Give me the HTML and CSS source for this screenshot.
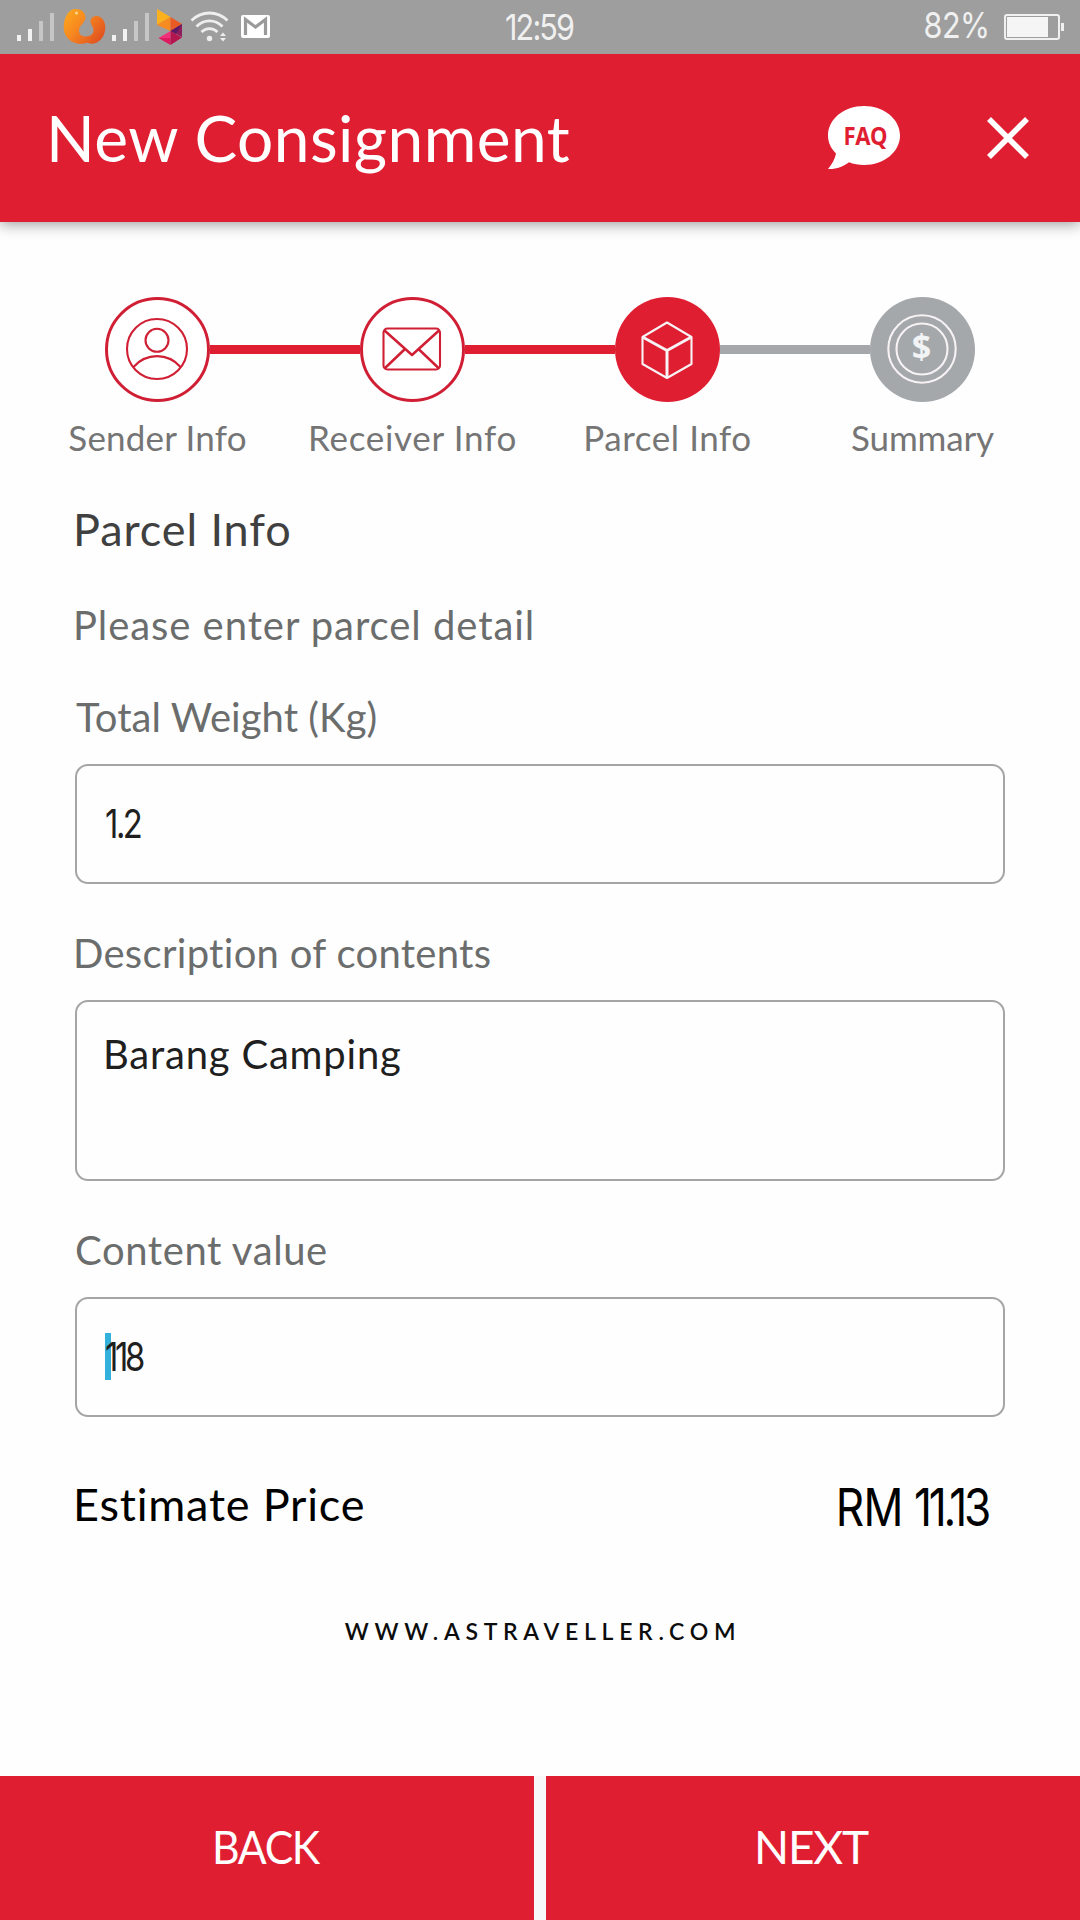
FILE: index.html
```html
<!DOCTYPE html>
<html lang="en">
<head>
<meta charset="utf-8">
<title>New Consignment</title>
<link rel="stylesheet" href="styles.css">
</head>
<body>
<div class="status">
  <svg class="status-icons" width="280" height="54" viewBox="0 0 280 54">
    <defs>
      <linearGradient id="flame" x1="0" y1="0" x2="1" y2="0.7">
        <stop offset="0" stop-color="#fdab1c"/>
        <stop offset="0.45" stop-color="#f78a20"/>
        <stop offset="1" stop-color="#e2531f"/>
      </linearGradient>
    </defs>
    <g fill="#f2f2f2"><rect x="17" y="35" width="4" height="6"/><rect x="28" y="29" width="4" height="12"/><rect x="112" y="35" width="4" height="6"/><rect x="123" y="29" width="4" height="12"/></g>
    <g fill="#c6c6c6"><rect x="39" y="21" width="4" height="20"/><rect x="50" y="13" width="4" height="28"/><rect x="134" y="21" width="4" height="20"/><rect x="145" y="13" width="4" height="28"/></g>
    <path fill="url(#flame)" d="M74.500 9C80.500 8.500 85.500 12 85.500 17.500C85.500 22 79 26 79 30.500C79 34.500 82 36.500 86 36.500C91 36.500 94 33.500 93.500 29.500C93 26 90 24 90.500 20.500C91 17 94.500 15.500 98 16.200C103 17.300 105.500 22.500 105.300 28C105 38 98 44 91 43.700C89 43.600 88.500 42.300 87 42.800C84.500 43.700 80 44.200 76 43.200C68.500 41.300 63.700 35 63.700 27.500C63.700 17.500 68.500 9.600 74.500 9Z"/>
    <circle cx="76.500" cy="13" r="1.500" fill="#ffd98a"/>
    <path fill="#fbb01e" d="M157 9L170.500 17L157 25Z"/>
    <path fill="#f68b1f" d="M170.500 17L157 25L170.500 31Z"/>
    <path fill="#ea5a24" d="M170.500 17L182 24L170.500 31Z"/>
    <path fill="#8e1d5c" d="M182 24V37L170.500 31Z"/>
    <path fill="#5c1a66" d="M182 24L170.500 31L176 34Z"/>
    <path fill="#f0307a" d="M170.500 31L158.500 38L170.500 38.500Z"/>
    <path fill="#e0185f" d="M158.500 38L170.500 45V38Z"/>
    <path fill="#b3154f" d="M170.500 31L182 37.500L170.500 45Z"/>
    <g fill="none" stroke="#eeeeee" stroke-width="2.800">
      <path d="M191.500 20.500C202 10.500 217 10.500 227.500 20.500"/>
      <path d="M196.500 26.500C204 19 215 19 222.500 26.500"/>
      <path d="M201.500 32C206 27.500 213 27.500 217.500 32"/>
    </g>
    <circle cx="209.500" cy="38.500" r="2.700" fill="#eeeeee"/>
    <path fill="#eeeeee" d="M220 36L223 32.500L226 36ZM220 38L223 41.500L226 38Z"/>
    <rect x="241" y="15" width="29" height="23" rx="2" fill="#ffffff"/>
    <path d="M245.500 35V19.500L255.500 27L265.500 19.500V35" fill="none" stroke="#9a9a9a" stroke-width="3.200"/>
  </svg>
  <div class="clock"><span class="clock-text">12:59</span></div>
  <div class="power">
    <span class="percent">82%</span>
    <svg width="60" height="26" viewBox="0 0 60 26">
      <rect x="1" y="1" width="54" height="24" rx="2" fill="none" stroke="#f0f0f0" stroke-width="2"/>
      <rect x="3" y="3" width="41" height="20" fill="#f5f5f5"/>
      <rect x="57" y="9" width="3" height="8" fill="#f0f0f0"/>
    </svg>
  </div>
</div>

<header class="appbar">
  <h1 class="title">New Consignment</h1>
  <div class="actions">
    <svg width="72" height="64" viewBox="0 0 72 64">
      <path fill="#ffffff" d="M36 0C56 0 72 13 72 29.500S56 59 36 59C30.500 59 25.500 58 21 56.200C15 60.500 8 63.500 0 63C4 58 7 53 8 47.500C3 42.500 0 36.500 0 29.500C0 13 16 0 36 0Z"/>
      <text class="faq" x="15.500" y="39" textLength="44" lengthAdjust="spacingAndGlyphs">FAQ</text>
    </svg>
    <svg width="42" height="42" viewBox="0 0 42 42"><path d="M2 2L40 40M40 2L2 40" stroke="#ffffff" stroke-width="5.600"/></svg>
  </div>
</header>

<main class="page">
  <ol class="steps">
    <li class="step done">
      <svg class="icon" width="105" height="105" viewBox="0 0 105 105">
        <circle class="ring" cx="52.500" cy="52.500" r="51"/>
        <g class="line"><circle cx="52" cy="52" r="30"/><circle cx="52" cy="43.300" r="11.500"/><path d="M28.500 70C41 55.500 63 55.500 75.500 70"/></g>
      </svg>
      <span class="name s1">Sender Info</span>
    </li>
    <li class="step done">
      <svg class="icon" width="105" height="105" viewBox="0 0 105 105">
        <circle class="ring" cx="52.500" cy="52.500" r="51"/>
        <g class="line"><rect x="23.500" y="31.500" width="56.500" height="41" rx="4"/><path stroke-width="2.500" d="M24.500 33.500L52 58L79 33.500M24.500 71.500L45 52M79 71.500L58.500 52"/></g>
      </svg>
      <span class="name s2">Receiver Info</span>
    </li>
    <li class="step current">
      <svg class="icon" width="105" height="105" viewBox="0 0 105 105">
        <circle class="disc" cx="52.500" cy="52.500" r="52.500"/>
        <g class="line"><path d="M52 25.500L76.500 40V67L52 81L27.500 67V40Z"/><path stroke-width="3" d="M27.500 40L52 53.500L76.500 40M52 53.500V81"/></g>
      </svg>
      <span class="name s3">Parcel Info</span>
    </li>
    <li class="step todo">
      <svg class="icon" width="105" height="105" viewBox="0 0 105 105">
        <circle class="disc" cx="52.500" cy="52.500" r="52.500"/>
        <g class="line"><circle cx="52" cy="52" r="33.700"/><circle cx="52" cy="52" r="25.500"/></g>
        <text class="dollar" x="51.500" y="62">$</text>
      </svg>
      <span class="name s4">Summary</span>
    </li>
  </ol>

  <section class="form">
    <h2 class="heading">Parcel Info</h2>
    <p class="label intro">Please enter parcel detail</p>
    <p class="label weight">Total Weight (Kg)</p>
    <div class="field"><span class="number n1">1.2</span></div>
    <p class="label desc">Description of contents</p>
    <div class="field area"><span class="words">Barang Camping</span></div>
    <p class="label value">Content value</p>
    <div class="field"><i class="caret"></i><span class="number n2">118</span></div>
    <div class="estimate">
      <span class="estimate-name">Estimate Price</span>
      <span class="price">RM <span class="amount">11.13</span></span>
    </div>
  </section>
  <p class="site">WWW.ASTRAVELLER.COM</p>
</main>

<nav class="buttons">
  <div class="button"><span class="back">BACK</span></div>
  <div class="button"><span class="next">NEXT</span></div>
</nav>
</body>
</html>
```

FILE: styles.css
```css
* { box-sizing: border-box; margin: 0; padding: 0; }

body {
  width: 1080px;
  height: 1920px;
  display: flex;
  flex-direction: column;
  overflow: hidden;
  background: #fefefe;
  font-family: Lato, "Liberation Sans", sans-serif;
  white-space: nowrap;
}

svg { display: block; flex: none; }

/* system status bar */
.status {
  height: 54px;
  flex: none;
  display: grid;
  grid-template-columns: 400px 280px 400px;
  align-items: center;
  background: #9e9e9e;
  color: #f0f0f0;
  font: 36px/54px Inter, sans-serif;
}
.clock { display: flex; justify-content: center; padding-right: 2px; }
.clock-text { letter-spacing: -2.2px; transform: scaleX(0.85); }
.power {
  display: flex;
  align-items: center;
  justify-content: flex-end;
  gap: 15px;
  padding-right: 16px;
}
.percent {
  letter-spacing: -0.7px;
  transform: scaleX(0.85);
  transform-origin: right center;
  padding-bottom: 4px;
  line-height: 50px;
}

/* app bar */
.appbar {
  height: 168px;
  flex: none;
  display: flex;
  justify-content: space-between;
  align-items: center;
  padding: 0 51px 0 46px;
  background: #df1e32;
  color: #fff;
  box-shadow: 0 2px 14px rgba(0, 0, 0, 0.4);
  clip-path: inset(0 0 -20px 0);
}
.title { font-size: 64px; font-weight: 400; letter-spacing: 0.44px; padding-bottom: 2px; }
.actions { display: flex; align-items: center; gap: 87px; }
.faq { font: 700 25px "Noto Sans", sans-serif; fill: #df1e32; }

.page { flex: 1; }

/* progress steps */
.steps {
  display: grid;
  grid-template-columns: repeat(4, 255px);
  padding: 75px 30px 0;
  list-style: none;
}
.step {
  display: grid;
  grid-template-columns: 1fr 105px 1fr;
  grid-template-rows: 105px 40px;
  row-gap: 15px;
  align-items: center;
}
.step::before, .step::after { content: ""; height: 9px; grid-row: 1; background: #df1e32; }
.step::before { grid-column: 1; }
.step::after { grid-column: 3; }
.step:first-child::before, .step:last-child::after { background: none; }
.current::after, .todo::before { background: #a4a8ab; }
.icon { grid-column: 2; grid-row: 1; }
.ring { fill: #fff; stroke: #d01f34; stroke-width: 3; }
.line { fill: none; stroke: #d01f34; stroke-width: 2.1; stroke-linejoin: round; }
.current .line, .todo .line { stroke: #f7f2f3; }
.current .disc { fill: #df1e32; }
.todo .disc { fill: #a4a8ab; }
.dollar { font: 700 34px "Noto Sans", sans-serif; fill: #f2f3f5; text-anchor: middle; }
.name {
  grid-column: 1 / -1;
  grid-row: 2;
  text-align: center;
  font-size: 35px;
  line-height: 40px;
  color: #757575;
}
.s1 { letter-spacing: 0.19px; }
.s2 { letter-spacing: 0.69px; }
.s3 { letter-spacing: 0.56px; }
.s4 { letter-spacing: -0.14px; }

/* form */
.form { padding: 45px 75px 0; }
.heading {
  margin: 0 0 45px -2px;
  font-size: 45px;
  line-height: 54px;
  font-weight: 400;
  letter-spacing: 0.9px;
  color: #404040;
}
.label { font-size: 40px; line-height: 48px; color: #6b6d6d; margin-bottom: 23px; }
.intro { letter-spacing: 0.94px; margin: 0 0 44px -2px; }
.weight { letter-spacing: 0.05px; margin-left: 1px; }
.desc { letter-spacing: 0.3px; margin-left: -2px; }
.value { letter-spacing: 0.6px; }

.field {
  position: relative;
  width: 930px;
  height: 120px;
  display: flex;
  align-items: center;
  margin-bottom: 45px;
  padding-left: 28px;
  border: 2px solid #a4a5a5;
  border-radius: 13px;
  color: #1f1f1f;
}
.area { height: 181px; align-items: flex-start; padding: 28px 0 0 26px; }
.words { font-size: 40px; line-height: 48px; letter-spacing: 0.79px; }
.number {
  position: relative;
  font: 40px/48px Inter, sans-serif;
  transform: scaleX(0.82);
  transform-origin: left center;
}
.n1 { letter-spacing: -3px; }
.n2 { letter-spacing: -4px; }
.caret {
  position: absolute;
  left: 28px;
  top: 34px;
  width: 6px;
  height: 47px;
  background: #34b0dd;
}

.estimate {
  display: flex;
  justify-content: space-between;
  align-items: flex-start;
  margin-top: 60px;
  padding-right: 17px;
  color: #000;
}
.estimate-name { margin-left: -2px; font-size: 45px; line-height: 54px; letter-spacing: 0.8px; }
.price {
  font: 52px/62px Inter, sans-serif;
  letter-spacing: -1px;
  transform: scaleX(0.85);
  transform-origin: right center;
}
.amount { letter-spacing: -3.8px; }

.site {
  margin-top: 78px;
  padding-left: 6px;
  text-align: center;
  font-size: 23px;
  line-height: 28px;
  font-weight: 600;
  letter-spacing: 5.7px;
  color: #0c0c0c;
}

/* bottom actions */
.buttons {
  height: 144px;
  flex: none;
  display: grid;
  grid-template-columns: 534px 534px;
  gap: 12px;
  background: #f7f7f7;
}
.button {
  display: flex;
  justify-content: center;
  align-items: center;
  padding: 0 4px 3px 0;
  background: #df1e32;
  color: #fff;
  font-size: 46px;
}
.back { letter-spacing: -1.5px; transform: scaleX(0.93); }
.next { letter-spacing: -1.2px; }
```
